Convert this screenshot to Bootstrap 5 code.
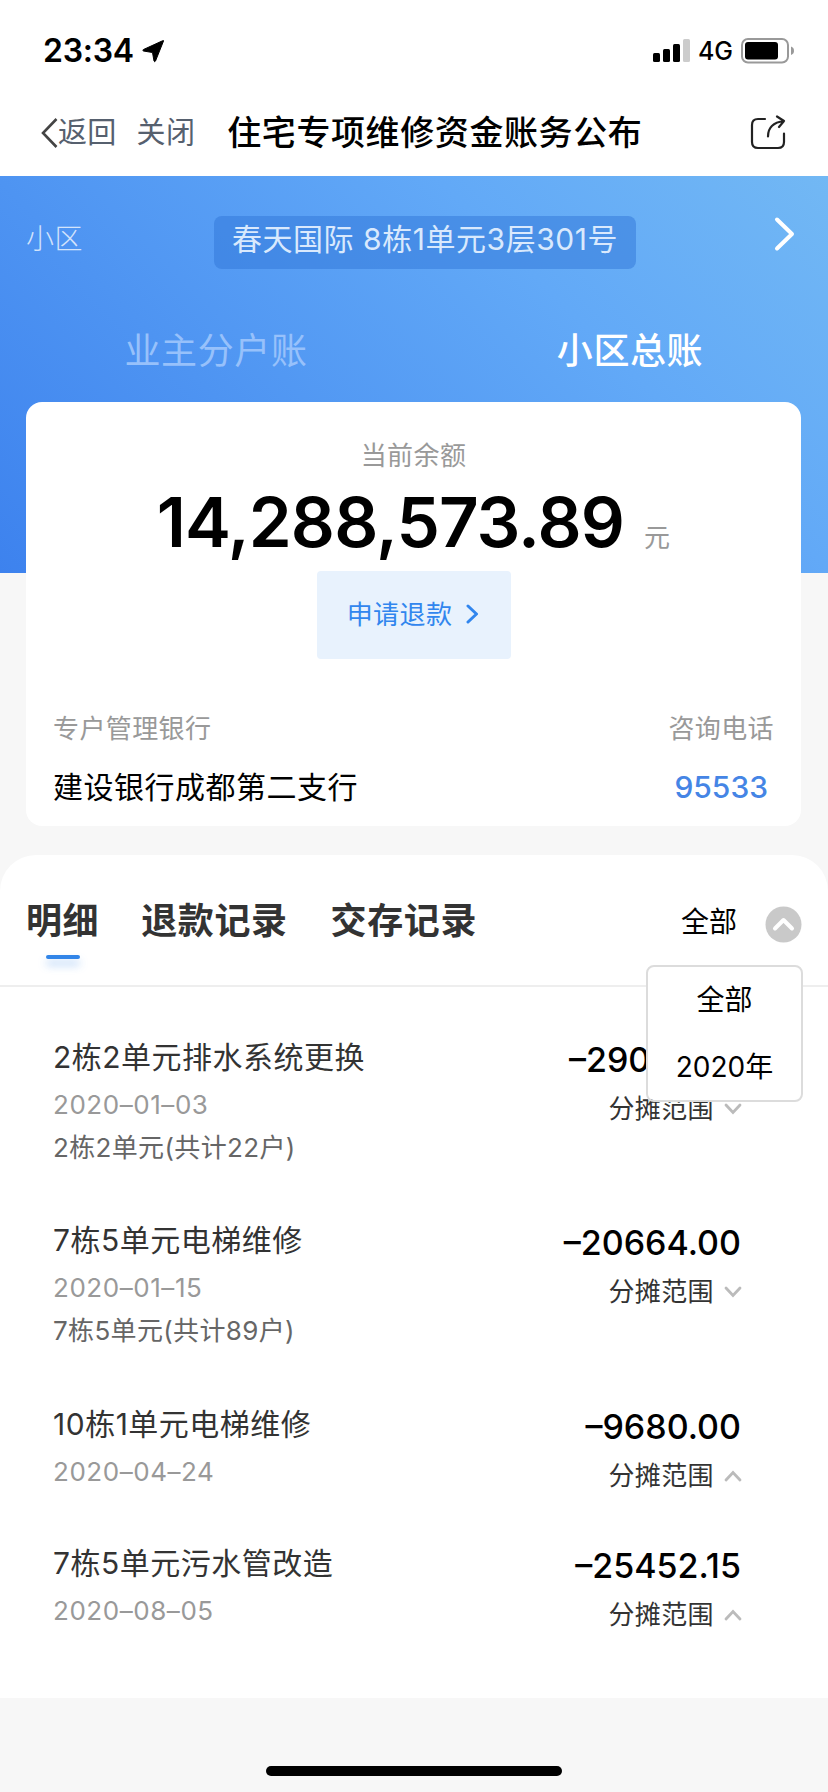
<!DOCTYPE html>
<html lang="zh-CN">
<head>
<meta charset="utf-8">
<meta name="viewport" content="width=device-width, initial-scale=1">
<title>住宅专项维修资金账务公布</title>
<link rel="stylesheet" href="https://cdn.jsdelivr.net/npm/bootstrap@5.3.0/dist/css/bootstrap.min.css">
<style>
  body { font-family: Inter, "Noto Sans CJK SC", sans-serif; background: #f7f7f7; color: #000; height: 1792px; overflow: hidden; white-space: nowrap; }
  svg { display: block; flex: none; }
  .status { height: 88px; padding: 0 33px 2px 43px; }
  .clock { font-size: 32px; font-weight: 600; line-height: 40px; letter-spacing: -.25px; }
  .net { font-size: 25px; font-weight: 500; line-height: 40px; }
  .topnav { height: 88px; padding: 1px 42px 0 41px; }
  .navlink { font-size: 29px; line-height: 40px; color: #56606e; letter-spacing: .3px; }
  .page-title { font-size: 34px; font-weight: 500; line-height: 40px; letter-spacing: .6px; }
  .hero { height: 397px; padding: 40px 33px 0 26px; background: linear-gradient(45deg, #3d82ee 0%, #4e94f2 32%, #62a9f7 68%, #72b8f4 100%); color: #fff; }
  .area { width: 188px; font-size: 28px; line-height: 46px; font-weight: 300; color: rgba(255,255,255,.75); letter-spacing: .4px; }
  .house { width: 422px; height: 53px; border-radius: 8px; background: rgba(48,118,215,.5); font-size: 30px; line-height: 47px; color: #d9e9fd; letter-spacing: .55px; }
  .ledger { font-size: 36px; line-height: 60px; letter-spacing: .6px; margin: 52px -33px 0 -26px; }
  .ledger > div:first-child { padding-left: 18px; color: #97c1fb; }
  .ledger > div:last-child { padding-left: 18px; font-weight: 500; }
  .balance { margin: -171px 27px 0 26px; height: 424px; border: 0; border-radius: 16px; padding: 34px 27px 0; color: #000; }
  .hint { font-size: 26px; line-height: 40px; color: #999; letter-spacing: .4px; }
  .total { height: 70px; font-size: 69px; line-height: 70px; font-weight: 600; margin-top: 11px; }
  .total-num { letter-spacing: -.9px; }
  .total .hint { font-weight: 400; }
  .refund { width: 194px; height: 88px; margin: 14px auto 50px; border-radius: 4px; background: #e8f2fd; color: #3186ee; font-size: 26px; letter-spacing: .4px; border: 0; padding: 0 1px 2px 0; }
  .bank { font-size: 30px; line-height: 40px; letter-spacing: .5px; }
  .account { padding-top: 18px; }
  .phone { font-size: 30px; font-weight: 500; line-height: 40px; color: #4585e5; margin-right: 6px; }
  .sheet { height: 843px; margin-top: 29px; background: #fff; border-radius: 36px 36px 0 0; }
  .tabbar { height: 132px; border-bottom: 2px solid #eee; padding: 46px 26px 0; }
  .tabitem { font-size: 36px; font-weight: 700; line-height: 40px; color: #333; letter-spacing: .6px; }
  .tabitem.on::after { content: ""; display: block; width: 34px; height: 4px; margin: 14px auto 0; border-radius: 2px; background: #3285e8; box-shadow: 0 6px 8px rgba(50,133,232,.4); }
  .filter { font-size: 28px; line-height: 42px; }
  .filter svg { margin: 5px 0 0 28px; }
  .year-menu { display: block; position: absolute; right: -1px; top: 64px; width: 157px; height: 137px; min-width: 0; padding: 0; border: 2px solid #dcdcdc; border-radius: 8px; font-size: 28px; text-align: center; color: #000; }
  .year-menu div { line-height: 67px; }
  .rows { padding: 50px 86px 0 53px; }
  .entry { margin-bottom: 57px; }
  .entry:nth-child(2) { margin-bottom: 58px; }
  .entry:nth-child(3) { margin-bottom: 52px; }
  .name { font-size: 30px; line-height: 40px; color: #333; letter-spacing: .5px; }
  .date { font-size: 26px; line-height: 30px; color: #999; margin-top: 13px; letter-spacing: .55px; }
  .scope { font-size: 26px; line-height: 30px; color: #666; margin-top: 13px; letter-spacing: .35px; }
  .sum { font-size: 34px; line-height: 40px; font-weight: 500; margin: 3px 1px 0 0; }
  .sum.cut { width: 172px; }
  .share-scope { font-size: 26px; line-height: 30px; color: #333; margin-top: 14px; letter-spacing: .4px; gap: 10px; }
  .homebar { width: 296px; height: 10px; border-radius: 5px; background: #000; margin: 68px auto 0; }
</style>
</head>
<body>
<header class="bg-white">
  <div class="status d-flex align-items-center justify-content-between">
    <div class="d-flex align-items-center gap-2 pt-3">
      <span class="clock">23:34</span>
      <svg width="23" height="23" viewBox="0 0 23 23"><path d="M21.500 1 13.500 21Q12.700 22.500 12 21L10.500 12.500 1.500 11Q0 10.400 1.500 9.500L20.500.800Q22 .3 21.500 1Z" fill="#000" stroke="#000" stroke-width="1" stroke-linejoin="round"/></svg>
    </div>
    <div class="d-flex align-items-center pt-3">
      <svg class="me-2" width="38" height="24" viewBox="0 0 38 24"><rect x="1" y="14" width="7" height="9" rx="1.500"/><rect x="11" y="10" width="7" height="13" rx="1.500"/><rect x="21" y="5" width="7" height="18" rx="1.500"/><rect x="31" y="0" width="7" height="23" rx="1.500" fill="#ccc"/></svg>
      <span class="net me-2">4G</span>
      <svg width="54" height="26" viewBox="0 0 54 26"><rect x="1" y="1" width="46" height="23.500" rx="6" fill="none" stroke="#999" stroke-width="2"/><rect x="4" y="4" width="33" height="17.500" rx="3"/><path d="M50 8.500Q53 9.500 53 12.700T50 17Z" fill="#999"/></svg>
    </div>
  </div>
  <nav class="topnav d-flex align-items-center">
    <svg width="17" height="32" viewBox="0 0 17 32"><path d="M15.500 2 2 16l13.500 14" fill="none" stroke="#444" stroke-width="2.600"/></svg>
    <span class="navlink">返回</span>
    <span class="navlink ms-3 ps-1">关闭</span>
    <h1 class="page-title mb-0 ms-3 ps-3">住宅专项维修资金账务公布</h1>
    <svg class="ms-auto" width="36" height="36" viewBox="0 0 36 36"><g fill="none" stroke="#222" stroke-width="2.200" stroke-linecap="round" stroke-linejoin="round"><path d="M15 4H8Q2 4 2 10v17q0 6 6 6h20q6 0 6-6V18.500"/><path d="M18 21.500C18 13.500 22 7.500 34 6M27 1.500l7 4.500-5 6"/></g></svg>
  </nav>
</header>

<section class="hero">
  <div class="d-flex">
    <div class="area">小区</div>
    <div class="house text-center">春天国际 8栋1单元3层301号</div>
    <svg class="ms-auto" width="22" height="36" viewBox="0 0 22 36"><path d="M4 3.500 19 18 4 32.500" fill="none" stroke="#fff" stroke-width="4" stroke-linecap="round" stroke-linejoin="round"/></svg>
  </div>
  <div class="ledger row g-0 text-center">
    <div class="col-6">业主分户账</div>
    <div class="col-6">小区总账</div>
  </div>
</section>

<section class="balance card">
  <div class="hint text-center">当前余额</div>
  <div class="total d-flex justify-content-center align-items-baseline"><span class="total-num">14,288,573.89</span><span class="hint ms-3 ps-1">元</span></div>
  <button class="refund d-flex align-items-center justify-content-center">申请退款
    <svg style="margin-left:14px" width="13" height="20" viewBox="0 0 13 20"><path d="M2 2l8.500 8L2 18" fill="none" stroke="#3186ee" stroke-width="3" stroke-linecap="round" stroke-linejoin="round"/></svg>
  </button>
  <div class="d-flex justify-content-between hint"><span>专户管理银行</span><span>咨询电话</span></div>
  <div class="account d-flex justify-content-between"><span class="bank">建设银行成都第二支行</span><a class="phone text-decoration-none">95533</a></div>
</section>

<section class="sheet">
  <div class="tabbar d-flex align-items-start">
    <div class="tabitem on">明细</div>
    <div class="tabitem" style="margin-left:42px">退款记录</div>
    <div class="tabitem" style="margin-left:43px">交存记录</div>
    <div class="filter dropdown ms-auto d-flex">
      <span>全部</span>
      <svg width="37" height="37" viewBox="0 0 37 37"><circle cx="18.500" cy="18.500" r="18" fill="#c9c9c9"/><path d="M10 22.500 18.500 14l8.500 8.500" fill="none" stroke="#fff" stroke-width="4" stroke-linecap="round" stroke-linejoin="round"/></svg>
      <div class="year-menu dropdown-menu"><div>全部</div><div>2020年</div></div>
    </div>
  </div>
  <div class="rows">
    <div class="entry d-flex justify-content-between">
      <div><div class="name">2栋2单元排水系统更换</div><div class="date">2020–01–03</div><div class="scope">2栋2单元(共计22户)</div></div>
      <div class="d-flex flex-column align-items-end"><div class="sum cut">–290</div><div class="share-scope d-flex align-items-center">分摊范围<svg width="18" height="12" viewBox="0 0 18 12"><path d="M2 2l7 7.500L16 2" fill="none" stroke="#bbb" stroke-width="2.800" stroke-linecap="round"/></svg></div></div>
    </div>
    <div class="entry d-flex justify-content-between">
      <div><div class="name">7栋5单元电梯维修</div><div class="date">2020–01–15</div><div class="scope">7栋5单元(共计89户)</div></div>
      <div class="d-flex flex-column align-items-end"><div class="sum">–20664.00</div><div class="share-scope d-flex align-items-center">分摊范围<svg width="18" height="12" viewBox="0 0 18 12"><path d="M2 2l7 7.500L16 2" fill="none" stroke="#bbb" stroke-width="2.800" stroke-linecap="round"/></svg></div></div>
    </div>
    <div class="entry d-flex justify-content-between">
      <div><div class="name">10栋1单元电梯维修</div><div class="date">2020–04–24</div></div>
      <div class="d-flex flex-column align-items-end"><div class="sum">–9680.00</div><div class="share-scope d-flex align-items-center">分摊范围<svg width="18" height="12" viewBox="0 0 18 12"><path d="M2 10l7-7.500 7 7.500" fill="none" stroke="#bbb" stroke-width="2.800" stroke-linecap="round"/></svg></div></div>
    </div>
    <div class="entry d-flex justify-content-between">
      <div><div class="name">7栋5单元污水管改造</div><div class="date">2020–08–05</div></div>
      <div class="d-flex flex-column align-items-end"><div class="sum">–25452.15</div><div class="share-scope d-flex align-items-center">分摊范围<svg width="18" height="12" viewBox="0 0 18 12"><path d="M2 10l7-7.500 7 7.500" fill="none" stroke="#bbb" stroke-width="2.800" stroke-linecap="round"/></svg></div></div>
    </div>
  </div>
</section>
<div class="homebar"></div>
<script src="https://cdn.jsdelivr.net/npm/bootstrap@5.3.0/dist/js/bootstrap.bundle.min.js"></script>
</body>
</html>
